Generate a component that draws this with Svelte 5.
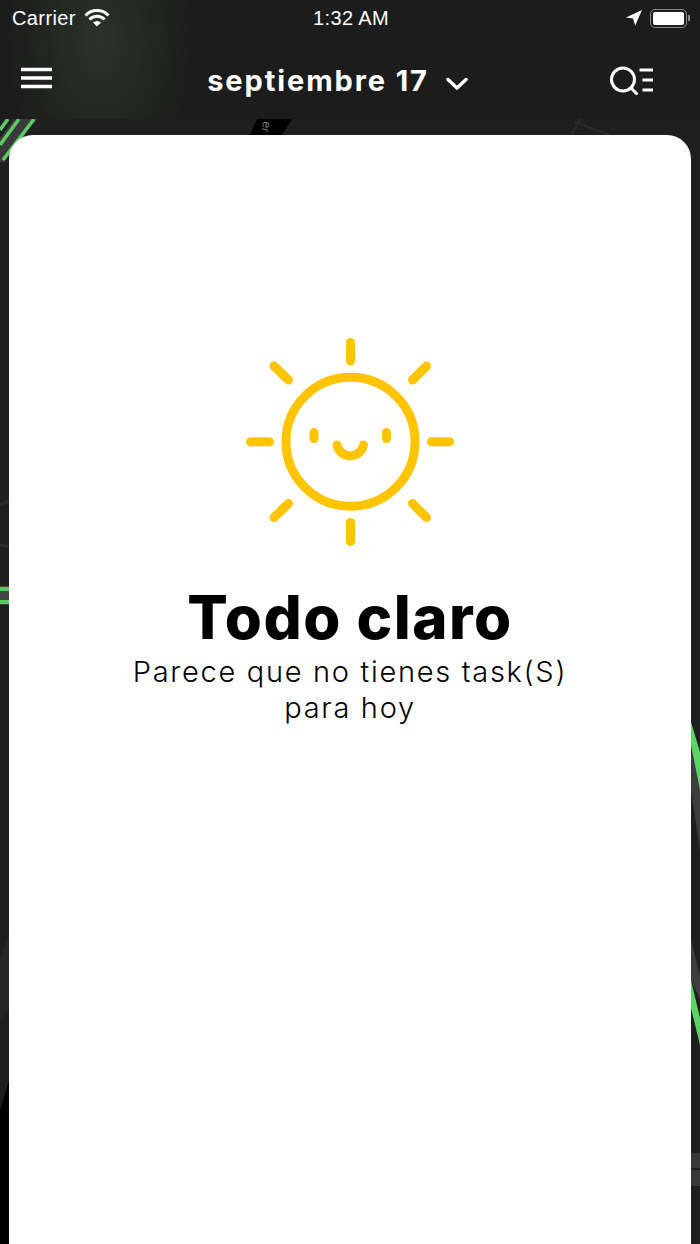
<script>
    let month = "septiembre 17";
    let title = "Todo claro";
    let lines = ["Parece que no tienes task(S)", "para hoy"];
    let rays = [
        [350.5, 342.5, 350.5, 361],
        [350.5, 522.5, 350.5, 541.5],
        [250.5, 441.7, 269.5, 441.7],
        [431.5, 441.7, 449.5, 441.7],
        [274, 366, 288.5, 380],
        [426.5, 366, 412.5, 380],
        [274, 517.5, 288.5, 503.5],
        [426.5, 517.5, 412.5, 503.5]
    ];
</script>

<div class="screen">
    <svg class="map" width="700" height="1244" viewBox="0 0 700 1244">
        <!-- map behind the card -->
        <path d="M0 1110 L9 1080 L9 1244 L0 1244 Z" fill="#000" />
        <path d="M0 960 L9 930 L9 1010 L0 1020 Z" fill="#262626" />
        <path d="M0 505 L30 492 M0 545 L20 548" stroke="#2b2b2b" stroke-width="3" fill="none" />
        <path d="M257 119 L292 119 L282 135 L250 135 Z" fill="#000" />
        <text class="road" x="262" y="134" transform="rotate(100 268 128)">er</text>
        <path d="M571 135 L581 119 M575 122 L610 135" stroke="#2c2c2c" stroke-width="2" fill="none" />
        <rect x="0" y="586" width="10" height="19" fill="#444" />
        <rect x="0" y="587" width="10" height="4" fill="#5cc962" />
        <rect x="0" y="600" width="10" height="4" fill="#5cc962" />
        <path d="M0 138 L14 119 L37 119 L4 162 L0 162 Z" fill="#3a3a3a" />
        <path d="M0 130 L8 119 M0 145 L19 119 M3 160 L34 119" stroke="#5cc962" stroke-width="3.6" fill="none" />
        <path d="M691 722 L700 760 L700 850 L691 790 Z" fill="#3d3d3d" />
        <path d="M691 722 L700 752 L700 790 L691 745 Z" fill="#5ad464" />
        <path d="M691 940 L700 975 L700 1000 L691 980 Z" fill="#3d3d3d" />
        <path d="M691 980 L700 1018 L700 1045 L691 1008 Z" fill="#5ad464" />
        <rect x="691" y="1153" width="9" height="15" fill="#383838" />
        <rect x="691" y="1170" width="9" height="16" fill="#383838" />
    </svg>

    <header>
        <div class="status">
            <div class="status-left">
                <span>Carrier</span>
                <svg width="26" height="18" viewBox="0 0 26 18">
                    <path d="M1.5 6.5 A16 16 0 0 1 24.5 6.5 M5.5 10.5 A10.5 10.5 0 0 1 20.5 10.5" stroke="#fff" stroke-width="3" fill="none" />
                    <path d="M9 13.5 A6 6 0 0 1 17 13.5 L13 17.5 Z" fill="#fff" />
                </svg>
            </div>
            <div class="time">1:32 AM</div>
            <div class="status-right">
                <svg width="16" height="16" viewBox="0 0 16 16">
                    <path d="M0 7.5 L16 0 L9.2 15.5 L7 8.5 Z" fill="#fff" />
                </svg>
                <div class="battery"><div class="charge"></div></div>
                <div class="nub"></div>
            </div>
        </div>
        <nav>
            <svg class="menu" width="31" height="22" viewBox="0 0 31 22">
                <path d="M0 2.5 H31 M0 11 H31 M0 19.5 H31" stroke="#fff" stroke-width="3.4" />
            </svg>
            <div class="month">
                <span>{month}</span>
                <svg width="22" height="14" viewBox="0 0 22 14">
                    <path d="M2 2.5 L11 11 L20 2.5" stroke="#fff" stroke-width="3.4" fill="none" stroke-linecap="round" stroke-linejoin="round" />
                </svg>
            </div>
            <svg class="search" width="44" height="32" viewBox="0 0 44 32">
                <circle cx="14" cy="16.5" r="11.5" stroke="#fff" stroke-width="3" fill="none" />
                <path d="M22 25 L27.5 30.5" stroke="#fff" stroke-width="3" stroke-linecap="round" />
                <path d="M30.5 7 H44 M33.5 17 H44 M33.5 27 H44" stroke="#fff" stroke-width="3" />
            </svg>
        </nav>
    </header>

    <main class="card">
        <svg class="sun" width="700" height="220" viewBox="0 330 700 220">
            <circle cx="350.5" cy="441.7" r="64.5" stroke="#ffc400" stroke-width="9" fill="none" />
            {#each rays as r}
                <line x1={r[0]} y1={r[1]} x2={r[2]} y2={r[3]} stroke="#ffc400" stroke-width="9" stroke-linecap="round" />
            {/each}
            <path d="M314 432.5 V438.5 M386.5 432.5 V438.5" stroke="#ffc400" stroke-width="9" stroke-linecap="round" />
            <path d="M337 445 A13.5 13.5 0 0 0 363.5 445" stroke="#ffc400" stroke-width="9" stroke-linecap="round" fill="none" />
        </svg>
        <h1>{title}</h1>
        {#each lines as line}
            <p>{line}</p>
        {/each}
    </main>
</div>

<style>
:global(body) {
    margin: 0;
    background: #1e1e1e;
}
.screen {
    position: relative;
    width: 700px;
    height: 1244px;
    overflow: hidden;
    display: flex;
    flex-direction: column;
    background: #1f1f1f;
    font-family: "Inter", "Liberation Sans", sans-serif;
}
.map {
    position: absolute;
    top: 0;
    left: 0;
}
.road {
    font-family: "Liberation Sans", sans-serif;
    font-size: 12px;
    fill: #777;
}
header {
    position: relative;
    height: 119px;
    background: radial-gradient(ellipse 95px 150px at 100px 40px, #2a3329 0%, rgba(30, 32, 30, 0) 100%), #1c1c1c;
    color: #fff;
}
.status {
    display: grid;
    grid-template-columns: 1fr auto 1fr;
    align-items: center;
    height: 36px;
    padding: 0 10px 0 12px;
    font-family: "Liberation Sans", sans-serif;
    font-size: 20px;
    letter-spacing: 0.4px;
}
.status-left {
    display: flex;
    align-items: center;
    gap: 8px;
}
.status-right {
    display: flex;
    align-items: center;
    justify-content: flex-end;
    gap: 8px;
}
.battery {
    box-sizing: border-box;
    width: 37px;
    height: 19px;
    padding: 2px;
    border: 1.5px solid #8a8a8a;
    border-radius: 5px;
}
.charge {
    height: 100%;
    border-radius: 2px;
    background: #fff;
}
.nub {
    width: 2px;
    height: 6px;
    margin-left: -7px;
    background: #8a8a8a;
}
nav {
    display: flex;
    align-items: center;
    height: 88px;
    margin-top: -1px;
    padding: 0 47px 0 21px;
    justify-content: space-between;
}
.menu {
    margin-top: -2px;
}
.month {
    display: flex;
    align-items: center;
    gap: 17px;
    margin-left: 14px;
    margin-top: 3px;
    font-size: 29px;
    font-weight: 700;
    letter-spacing: 1.9px;
}
.month svg {
    margin-top: 6px;
}
.card {
    position: relative;
    flex: 1;
    margin: 16px 9px 0;
    padding-top: 195px;
    border-radius: 24px 24px 0 0;
    background: #fff;
    text-align: center;
    color: #000;
}
.sun {
    display: block;
    width: 700px;
    margin-left: -9px;
}
h1 {
    margin: 32px 0 0;
    font-size: 60px;
    line-height: 70px;
    font-weight: 800;
    letter-spacing: 1.5px;
}
p {
    margin: 0;
    font-size: 29px;
    line-height: 36px;
    font-weight: 300;
    letter-spacing: 1.7px;
    position: relative;
    top: 2px;
}
</style>
